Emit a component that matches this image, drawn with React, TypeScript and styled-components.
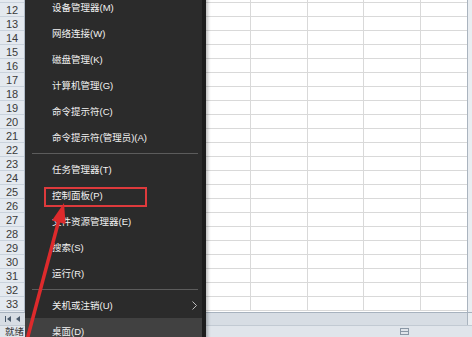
import React from 'react';
import styled, { createGlobalStyle } from 'styled-components';

const GlobalStyle = createGlobalStyle`
  html, body {
    margin: 0;
    padding: 0;
    width: 472px;
    height: 337px;
    overflow: hidden;
    background: #ffffff;
  }
  body {
    font-family: "Liberation Sans", "Noto Sans CJK SC", sans-serif;
  }
`;

const Window = styled.div`
  position: relative;
  width: 472px;
  height: 337px;
  display: flex;
  flex-direction: column;
  overflow: hidden;
`;

const SheetArea = styled.div`
  display: flex;
  height: 312px;
  overflow: hidden;
`;

const RowHeader = styled.div`
  width: 25px;
  flex-shrink: 0;
  margin-top: -11px;
  display: flex;
  flex-direction: column;
  background: #e4e9ef;
  border-right: 1px solid #b4bfcc;
  box-sizing: border-box;
`;

const RowNum = styled.div`
  height: 14px;
  flex-shrink: 0;
  box-sizing: border-box;
  border-bottom: 1px solid #c9d2dc;
  display: flex;
  align-items: center;
  justify-content: center;
  font-size: 11px;
  color: #3a3a3a;
`;

const Grid = styled.div`
  flex: 1;
  margin-top: -11px;
  display: grid;
  grid-template-columns: repeat(8, 56.5px);
  grid-auto-rows: 14px;
  overflow: hidden;
  align-content: start;
`;

const Cell = styled.div`
  box-sizing: border-box;
  border-right: 1px solid #d9d9d9;
  border-bottom: 1px solid #d9d9d9;
`;

const VScroll = styled.div`
  width: 4px;
  flex-shrink: 0;
  background: #e9edf1;
  border-left: 1px solid #aab4bf;
`;

const TabBar = styled.div`
  height: 13px;
  box-sizing: border-box;
  display: flex;
  align-items: center;
  gap: 4px;
  padding-left: 5px;
  background: #d7dde4;
  border-top: 1px solid #a7b2be;
`;

const TabSplit = styled.div`
  margin-left: auto;
  width: 4px;
  height: 100%;
  background: #e9edf1;
  border-left: 1px solid #aab4bf;
`;

const StatusBar = styled.div`
  height: 12px;
  box-sizing: border-box;
  display: flex;
  align-items: center;
  padding: 0 8px 0 5px;
  background: #e0e5eb;
  border-top: 1px solid #c2cad3;
  font-size: 9.5px;
  line-height: 1;
  color: #333333;
  font-family: "Noto Sans CJK SC", sans-serif;
`;

const StatusIcons = styled.div`
  margin-left: auto;
  display: flex;
  gap: 5px;
  margin-right: 55px;
`;

const Menu = styled.div`
  position: absolute;
  left: 25px;
  top: -6px;
  width: 177px;
  background: #2b2b2b;
  border-right: 4px solid #1d1d1d;
  box-shadow: 2px 0 3px rgba(0, 0, 0, 0.25);
  display: flex;
  flex-direction: column;
`;

const MenuItem = styled.div<{ $active?: boolean }>`
  height: 26px;
  flex-shrink: 0;
  display: flex;
  align-items: center;
  padding: 0 5px 0 27px;
  background: ${(p) => (p.$active ? '#414141' : 'transparent')};
  color: #f2f2f2;
  font-size: 9.5px;
  font-family: "Liberation Sans", "Noto Sans CJK SC", sans-serif;
`;

const Chevron = styled.svg`
  margin-left: auto;
`;

const Separator = styled.div`
  height: 6px;
  flex-shrink: 0;
  display: flex;
  align-items: center;
  padding: 0 4px 0 7px;

  &::after {
    content: '';
    flex: 1;
    height: 1px;
    background: #5c5c5c;
  }
`;

const HighlightBox = styled.div`
  position: absolute;
  left: 44px;
  top: 187px;
  width: 103px;
  height: 20px;
  box-sizing: border-box;
  border: 2.5px solid #de3a3c;
`;

const ArrowLayer = styled.svg`
  position: absolute;
  left: 0;
  top: 0;
  pointer-events: none;
`;

type Entry = { label: string; sep?: boolean; sub?: boolean; active?: boolean };

const entries: Entry[] = [
  { label: '设备管理器(M)' },
  { label: '网络连接(W)' },
  { label: '磁盘管理(K)' },
  { label: '计算机管理(G)' },
  { label: '命令提示符(C)' },
  { label: '命令提示符(管理员)(A)' },
  { label: '', sep: true },
  { label: '任务管理器(T)' },
  { label: '控制面板(P)' },
  { label: '文件资源管理器(E)' },
  { label: '搜索(S)' },
  { label: '运行(R)' },
  { label: '', sep: true },
  { label: '关机或注销(U)', sub: true },
  { label: '桌面(D)', active: true },
];

const rows = Array.from({ length: 23 }, (_, i) => 11 + i);

const App = () => {
  return (
    <Window>
      <GlobalStyle />
      <SheetArea>
        <RowHeader>
          {rows.map((r) => (
            <RowNum key={r}>{r}</RowNum>
          ))}
        </RowHeader>
        <Grid>
          {Array.from({ length: rows.length * 8 }, (_, i) => (
            <Cell key={i} />
          ))}
        </Grid>
        <VScroll />
      </SheetArea>
      <TabBar>
        <svg width="7" height="6" viewBox="0 0 7 6">
          <rect x="0" y="0" width="1" height="6" fill="#4a5a6c" />
          <polygon points="6,0 2,3 6,6" fill="#4a5a6c" />
        </svg>
        <svg width="5" height="6" viewBox="0 0 5 6">
          <polygon points="4,0 0,3 4,6" fill="#4a5a6c" />
        </svg>
        <TabSplit />
      </TabBar>
      <StatusBar>
        <span>就绪</span>
        <StatusIcons>
          <svg width="9" height="7" viewBox="0 0 9 7">
            <rect x="0.5" y="0.5" width="8" height="6" fill="none" stroke="#8a97a5" />
            <line x1="0" y1="3.5" x2="9" y2="3.5" stroke="#8a97a5" />
          </svg>
        </StatusIcons>
      </StatusBar>

      <Menu>
        {entries.map((e, i) =>
          e.sep ? (
            <Separator key={i} />
          ) : (
            <MenuItem key={i} $active={e.active}>
              {e.label}
              {e.sub && (
                <Chevron width="5" height="9" viewBox="0 0 5 9">
                  <polyline points="0.5,0.5 4.5,4.5 0.5,8.5" fill="none" stroke="#bdbdbd" strokeWidth="1" />
                </Chevron>
              )}
            </MenuItem>
          )
        )}
      </Menu>

      <HighlightBox />

      <ArrowLayer width="472" height="337" viewBox="0 0 472 337">
        <line x1="27" y1="340" x2="60" y2="216" stroke="#dd2a2c" strokeWidth="3.5" />
        <polygon points="64,203 52,220.5 65.6,224.1" fill="#dd2a2c" />
      </ArrowLayer>
    </Window>
  );
};

export default App;
